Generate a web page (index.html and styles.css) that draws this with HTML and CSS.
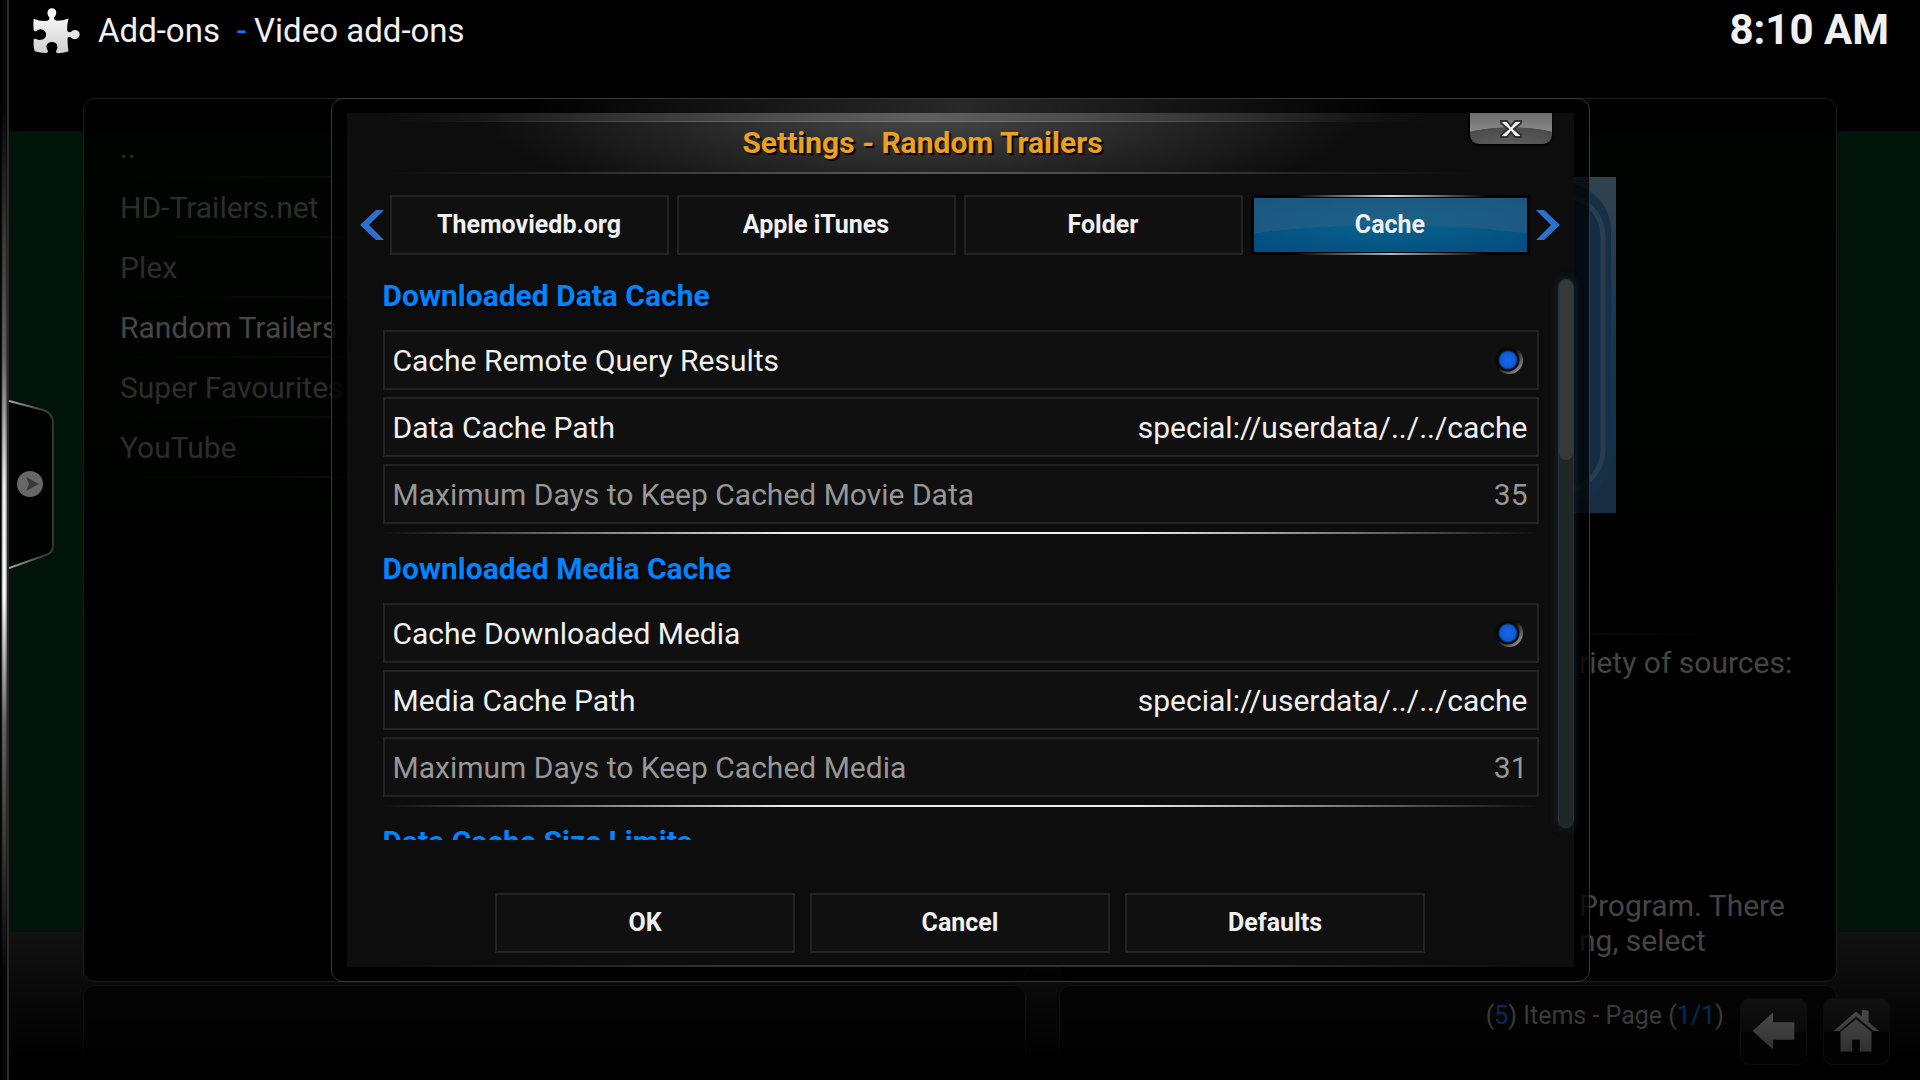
FILE: index.html
```html
<!DOCTYPE html>
<html lang="en">
<head>
<meta charset="utf-8">
<title>Settings - Random Trailers</title>
<link rel="stylesheet" href="styles.css">
</head>
<body>
<div class="page">
  <header class="topbar">
    <svg class="puzzle" viewBox="39 23 143 140" aria-hidden="true">
      <defs><linearGradient id="pz" x1="0" y1="0" x2="0" y2="1"><stop offset="0" stop-color="#fff"/><stop offset="1" stop-color="#cfcfcf"/></linearGradient></defs>
      <path fill="url(#pz)" d="M41 56Q62 65 82 62Q90 60 89 53Q82 46 83 37A13 13 0 0 1 110 37Q110 46 103 53Q102 60 112 62Q130 62 147 55Q142 75 143 92Q146 98 154 96Q159 90 167 90A14 14 0 0 1 167 118Q158 118 153 112Q145 110 144 116Q144 138 147 155Q130 161 114 161Q106 158 111 151Q114 146 113 138A17 15 0 0 0 80 138Q79 146 84 152Q86 159 78 160Q60 160 44 155Q39 138 41 120Q44 114 50 118Q56 121 62 120A17 16 0 0 0 62 88Q55 88 50 93Q44 96 41 90Q39 72 41 56Z"/>
    </svg>
    <h1 class="crumbs"><span>Add-ons</span><span class="dash">-</span><span>Video add-ons</span></h1>
    <time class="clock">8:10 AM</time>
  </header>

  <main class="stage">
    <section class="columns">
      <nav class="panel list">
        <a class="item" href="#">..</a>
        <a class="item" href="#">HD-Trailers.net</a>
        <a class="item" href="#">Plex</a>
        <a class="item current" href="#">Random Trailers</a>
        <a class="item" href="#">Super Favourites</a>
        <a class="item" href="#">YouTube</a>
      </nav>
      <article class="panel info">
        <svg class="art" viewBox="0 0 336 336" aria-hidden="true">
          <defs><linearGradient id="ag" x1="0" y1="0" x2="0" y2="1"><stop offset="0" stop-color="#31434f"/><stop offset=".5" stop-color="#1b344b"/><stop offset="1" stop-color="#172c40"/></linearGradient></defs>
          <rect width="336" height="336" fill="url(#ag)"/>
          <rect x="5" y="6" width="326" height="322" rx="48" fill="#17304a"/>
          <rect x="15" y="18" width="308" height="296" rx="42" fill="#142d47" stroke="#2b3d4b" stroke-width="5"/>
        </svg>
        <div class="plot">
          <p>riety of sources:</p>
          <p>Program. There<br>ng, select</p>
        </div>
      </article>
    </section>

    <div class="layer">
      <section class="dialog" role="dialog" aria-labelledby="dlg-title">
        <div class="sheet">
          <div class="titlebar">
            <h2 id="dlg-title">Settings - Random Trailers</h2>
            <button class="close" type="button" aria-label="Close">
              <svg viewBox="0 0 24 20" aria-hidden="true"><path d="M2 2H8L12 7L16 2H22V4L15 10L22 16V18H16L12 13L8 18H2V16L9 10L2 4Z" fill="#f4f4f4" stroke="#333" stroke-width="2"/></svg>
            </button>
          </div>
          <div class="tabs">
            <button class="arrow" type="button" aria-label="Previous"><svg viewBox="0 0 24 30"><path fill="#2f6fd0" d="M16 0H24L9 15L24 30H16L0 15Z"/></svg></button>
            <div class="tabset">
              <button class="btn" type="button">Themoviedb.org</button>
              <button class="btn" type="button">Apple iTunes</button>
              <button class="btn" type="button">Folder</button>
              <button class="btn active" type="button">Cache</button>
            </div>
            <button class="arrow" type="button" aria-label="Next"><svg viewBox="0 0 24 30"><path fill="#2f6fd0" d="M8 0H0L15 15L0 30H8L24 15Z"/></svg></button>
          </div>
          <div class="body">
            <div class="settings">
              <section class="group">
                <h3>Downloaded Data Cache</h3>
                <label class="row"><span>Cache Remote Query Results</span><input type="checkbox" checked></label>
                <button class="row" type="button"><span>Data Cache Path</span><span>special://userdata/../../cache</span></button>
                <button class="row muted" type="button"><span>Maximum Days to Keep Cached Movie Data</span><span>35</span></button>
              </section>
              <section class="group">
                <h3>Downloaded Media Cache</h3>
                <label class="row"><span>Cache Downloaded Media</span><input type="checkbox" checked></label>
                <button class="row" type="button"><span>Media Cache Path</span><span>special://userdata/../../cache</span></button>
                <button class="row muted" type="button"><span>Maximum Days to Keep Cached Media</span><span>31</span></button>
              </section>
              <section class="group">
                <h3>Data Cache Size Limits</h3>
              </section>
            </div>
            <div class="scroll"><div class="thumb"></div></div>
          </div>
          <div class="actions">
            <button class="btn" type="button">OK</button>
            <button class="btn" type="button">Cancel</button>
            <button class="btn" type="button">Defaults</button>
          </div>
        </div>
      </section>
    </div>
  </main>

  <footer class="bottom">
    <div class="shelves"><div class="shelf"></div><div class="shelf"></div></div>
    <div class="controls">
      <p class="count">(<b>5</b>) Items - Page (<b>1/1</b>)</p>
      <button class="tile" type="button" aria-label="Back">
        <svg viewBox="0 0 67 67"><path fill="url(#ig)" d="M12 33L33 14V24H55V42H33V52Z"/>
        <defs><linearGradient id="ig" x1="0" y1="0" x2="0" y2="1"><stop offset="0" stop-color="#494949"/><stop offset="1" stop-color="#303030"/></linearGradient></defs></svg>
      </button>
      <button class="tile" type="button" aria-label="Home">
        <svg viewBox="0 0 67 67"><path fill="url(#ig)" d="M10 33L33 13L39 18V11L46 12V24L57 33H51L33 18L16 33ZM17 34L33 21L49 34V54H37V42H29V54H17Z"/></svg>
      </button>
    </div>
  </footer>

  <div class="rail">
    <button class="handle" type="button" aria-label="Open menu">
      <svg viewBox="0 0 46 170">
        <defs><linearGradient id="hg"><stop offset="0" stop-color="#aaa"/><stop offset=".7" stop-color="#444"/><stop offset="1" stop-color="#333"/></linearGradient></defs>
        <path d="M0 1L34 10Q44 13 44 23V146Q44 154 34 156L0 168" fill="#000201" stroke="url(#hg)" stroke-width="2"/>
        <circle cx="21" cy="84" r="13" fill="#666867"/>
        <path d="M17 77L30 84L17 91L20 84Z" fill="#383a39"/>
      </svg>
    </button>
  </div>
</div>
</body>
</html>
```
FILE: styles.css
```css
* { box-sizing: border-box; }

body {
  margin: 0;
  background: #000;
  color: #f0f0f0;
  font-family: Roboto, "Liberation Sans", sans-serif;
  font-size: 30px;
}

h1, h2, h3, p { margin: 0; }

button {
  margin: 0;
  padding: 0;
  border: 0;
  background: none;
  color: inherit;
  font: inherit;
}

svg { display: block; }

.page {
  position: relative;
  display: grid;
  grid-template-rows: 98px 1fr 98px;
  min-height: 100vh;
  overflow: hidden;
  background:
    linear-gradient(#111, #000 130px) bottom / 100% 148px no-repeat,
    linear-gradient(#000 131px, #00140a 131px);
}

/* top bar */
.topbar {
  display: flex;
  align-items: flex-start;
  padding: 0 31px 0 33px;
}

.puzzle { width: 47px; height: 46px; margin: 8px 18px 0 0; }

.crumbs {
  flex: 1;
  display: flex;
  font-size: 33px;
  font-weight: 400;
  line-height: 62px;
}

.dash { color: #0084ff; margin: 0 8px 0 17px; }

.clock { font-size: 42px; font-weight: 700; line-height: 60px; }

/* background window */
.stage, .bottom { display: grid; }
.stage > *, .bottom > * { grid-area: 1 / 1; min-width: 0; }

.columns, .shelves {
  display: grid;
  grid-template-columns: 943fr 778fr;
  gap: 33px;
  padding: 0 83px;
}

.panel {
  border: 1px solid #1b1c1b;
  border-radius: 12px;
  background: linear-gradient(#000 34px, #000501 36px, #000200 45%, #000 60%);
  overflow: hidden;
}

.list { padding: 19px 36px; }

.item {
  display: block;
  height: 60px;
  background: linear-gradient(90deg, transparent, #0b0d0b 25%) bottom / 100% 2px no-repeat;
  color: #2c2c2c;
  line-height: 60px;
  text-decoration: none;
}

.current { color: #464646; }

.info { padding-top: 78px; }

.art { width: 336px; height: 336px; margin: 0 auto 120px; }

.plot {
  padding: 12px 0 0 519px;
  background: linear-gradient(90deg, #0b0b0b 65%, transparent 90%) top / 100% 2px no-repeat;
  color: #444;
  line-height: 35px;
  white-space: nowrap;
}

.plot p + p { margin-top: 208px; }

/* dialog */
.layer {
  z-index: 1;
  display: flex;
  justify-content: center;
}

.dialog {
  display: flex;
  width: 100%;
  max-width: 1259px;
  padding: 14px 15px 14px;
  border: 1px solid #393939;
  border-radius: 12px;
  background: linear-gradient(90deg, transparent 15%, rgba(50, 50, 50, .8) 50%, transparent 85%) top / 100% 14px no-repeat, rgba(0, 0, 0, .75);
}

.sheet {
  flex: 1;
  display: flex;
  flex-direction: column;
  min-width: 0;
  background:
    linear-gradient(90deg, transparent 3%, #333 30%, #333 70%, transparent 97%) bottom / 100% 2px no-repeat,
    #0d0d0d;
}

.titlebar {
  position: relative;
  height: 61px;
  background:
    linear-gradient(90deg, transparent 3%, #5a5a5a 47%, transparent 92%) bottom / 100% 2px no-repeat,
    linear-gradient(90deg, transparent 8%, #777 47%, transparent 80%) 0 8px / 100% 1px no-repeat,
    linear-gradient(90deg, transparent 3%, rgba(110, 110, 110, .6) 47%, transparent 88%) 0 0 / 100% 9px no-repeat,
    radial-gradient(ellipse 36% 170% at 47% 0, #484848, #262626 55%, transparent);
}

.titlebar h2 {
  padding-right: 75px;
  color: #eda01c;
  font-size: 30px;
  font-weight: 700;
  line-height: 60px;
  text-align: center;
  text-shadow: 2px 2px 1px #000;
}

.close {
  position: absolute;
  top: 0;
  right: 22px;
  display: flex;
  justify-content: center;
  width: 82px;
  height: 31px;
  padding-top: 6px;
  border-radius: 0 0 9px 9px;
  background: radial-gradient(ellipse 75% 55% at 50% 100%, #5c5c5c 0, #4c4c4c 96%, transparent), linear-gradient(#6c6c6c, #8a8a8a 60%);
  box-shadow: -3px 0 0 -1px #000, 0 2px 3px #000;
}

.close svg { width: 24px; height: 20px; }

.tabs {
  display: flex;
  align-items: center;
  gap: 6px;
  margin-top: 21px;
  padding: 0 14px 0 13px;
}

.arrow svg { width: 24px; height: 30px; }

.tabset {
  flex: 1;
  display: grid;
  grid-template-columns: repeat(4, 1fr);
  gap: 8px;
}

.btn {
  height: 60px;
  padding-bottom: 2px;
  border: 2px solid #232323;
  background: #101010;
  font-size: 25px;
  font-weight: 700;
}

.active {
  border: 3px solid transparent;
  padding-bottom: 1px;
  background:
    linear-gradient(90deg, transparent 15%, #ddd 50%, transparent 85%) top / 100% 2px no-repeat border-box,
    linear-gradient(90deg, transparent 15%, #9bc 50%, transparent 85%) bottom / 100% 2px no-repeat border-box,
    linear-gradient(#000, #000) top / 100% 3px no-repeat border-box,
    linear-gradient(#000, #000) bottom / 100% 3px no-repeat border-box,
    radial-gradient(ellipse 80% 70% at 50% 120%, transparent 99%, rgba(60, 100, 130, .4)) padding-box,
    radial-gradient(ellipse at center, #06618c, #054c80) padding-box,
    #000;
}

.body {
  flex: 1 1 0;
  display: flex;
  gap: 19px;
  min-height: 579px;
  margin-top: 6px;
  padding-left: 36px;
}

.settings {
  flex: 1;
  height: 579px;
  overflow: hidden;
}

.group {
  display: flex;
  flex-direction: column;
  gap: 7px;
  height: 273px;
  background: linear-gradient(90deg, transparent, #eee 35%, #eee 65%, transparent) bottom / 100% 2px no-repeat;
}

.group h3 {
  height: 62px;
  color: #0084ff;
  font-size: 30px;
  font-weight: 700;
  line-height: 69px;
  text-shadow: 2px 2px 1px #000;
}

.row {
  display: flex;
  justify-content: space-between;
  align-items: center;
  height: 60px;
  padding: 0 9px 0 8px;
  border: 2px solid #232323;
  background: #101010;
}

.muted { color: #979797; }

.row input {
  appearance: none;
  width: 28px;
  height: 28px;
  margin: 0 5px 0 0;
  border-radius: 50%;
  background:
    radial-gradient(circle at 13px 14px, #1e64f0 0, #0b5bd0 8px, #080808 10px, #080808 11px, transparent 12px),
    linear-gradient(135deg, #0c0c0c 45%, #8a8a8a 85%);
}

.scroll {
  width: 16px;
  height: 549px;
  margin-top: 18px;
  border: 1px solid #263139;
  border-radius: 8px;
  background: #212629;
  box-shadow: 0 0 8px rgba(40, 75, 95, .5);
}

.thumb {
  height: 180px;
  border-radius: 8px;
  background: #36393b;
}

.actions {
  display: flex;
  justify-content: center;
  gap: 15px;
  padding: 53px 0 14px;
}

.actions .btn { width: 300px; }

/* footer */
.shelves { padding-top: 3px; }

.shelf {
  border: 1px solid #101010;
  border-bottom: 0;
  border-radius: 12px 12px 0 0;
  background: linear-gradient(#050505, #000);
  -webkit-mask: linear-gradient(#000 30%, transparent 85%);
  mask: linear-gradient(#000 30%, transparent 85%);
}

.controls {
  z-index: 1;
  display: flex;
  justify-content: flex-end;
  align-items: flex-start;
  gap: 16px;
  padding: 16px 30px 0 0;
}

.count { color: #3a3a3a; font-size: 25px; line-height: 36px; }
.count b { color: #002c5c; font-weight: 400; }

.tile {
  width: 67px;
  height: 67px;
  border: 1px solid #0c0c0c;
  border-radius: 9px;
  background: linear-gradient(#101010, #0a0a0a 50%, #030303 52%);
}

/* edge rail with the slide-out handle */
.rail {
  position: absolute;
  inset: 0 auto 0 0;
  display: flex;
  align-items: center;
  width: 9px;
  border-right: 2px solid #2c2c2c;
  background:
    linear-gradient(90deg, #000 1px, transparent 3px, transparent 5px, rgba(0, 0, 0, .5)),
    linear-gradient(#05080a 10%, #666 33%, #eee 45%, #fff 55%, #666 67%, #05080a 90%);
}

.handle { margin: -110px 0 0 9px; }
.handle svg { width: 46px; height: 170px; }
```
